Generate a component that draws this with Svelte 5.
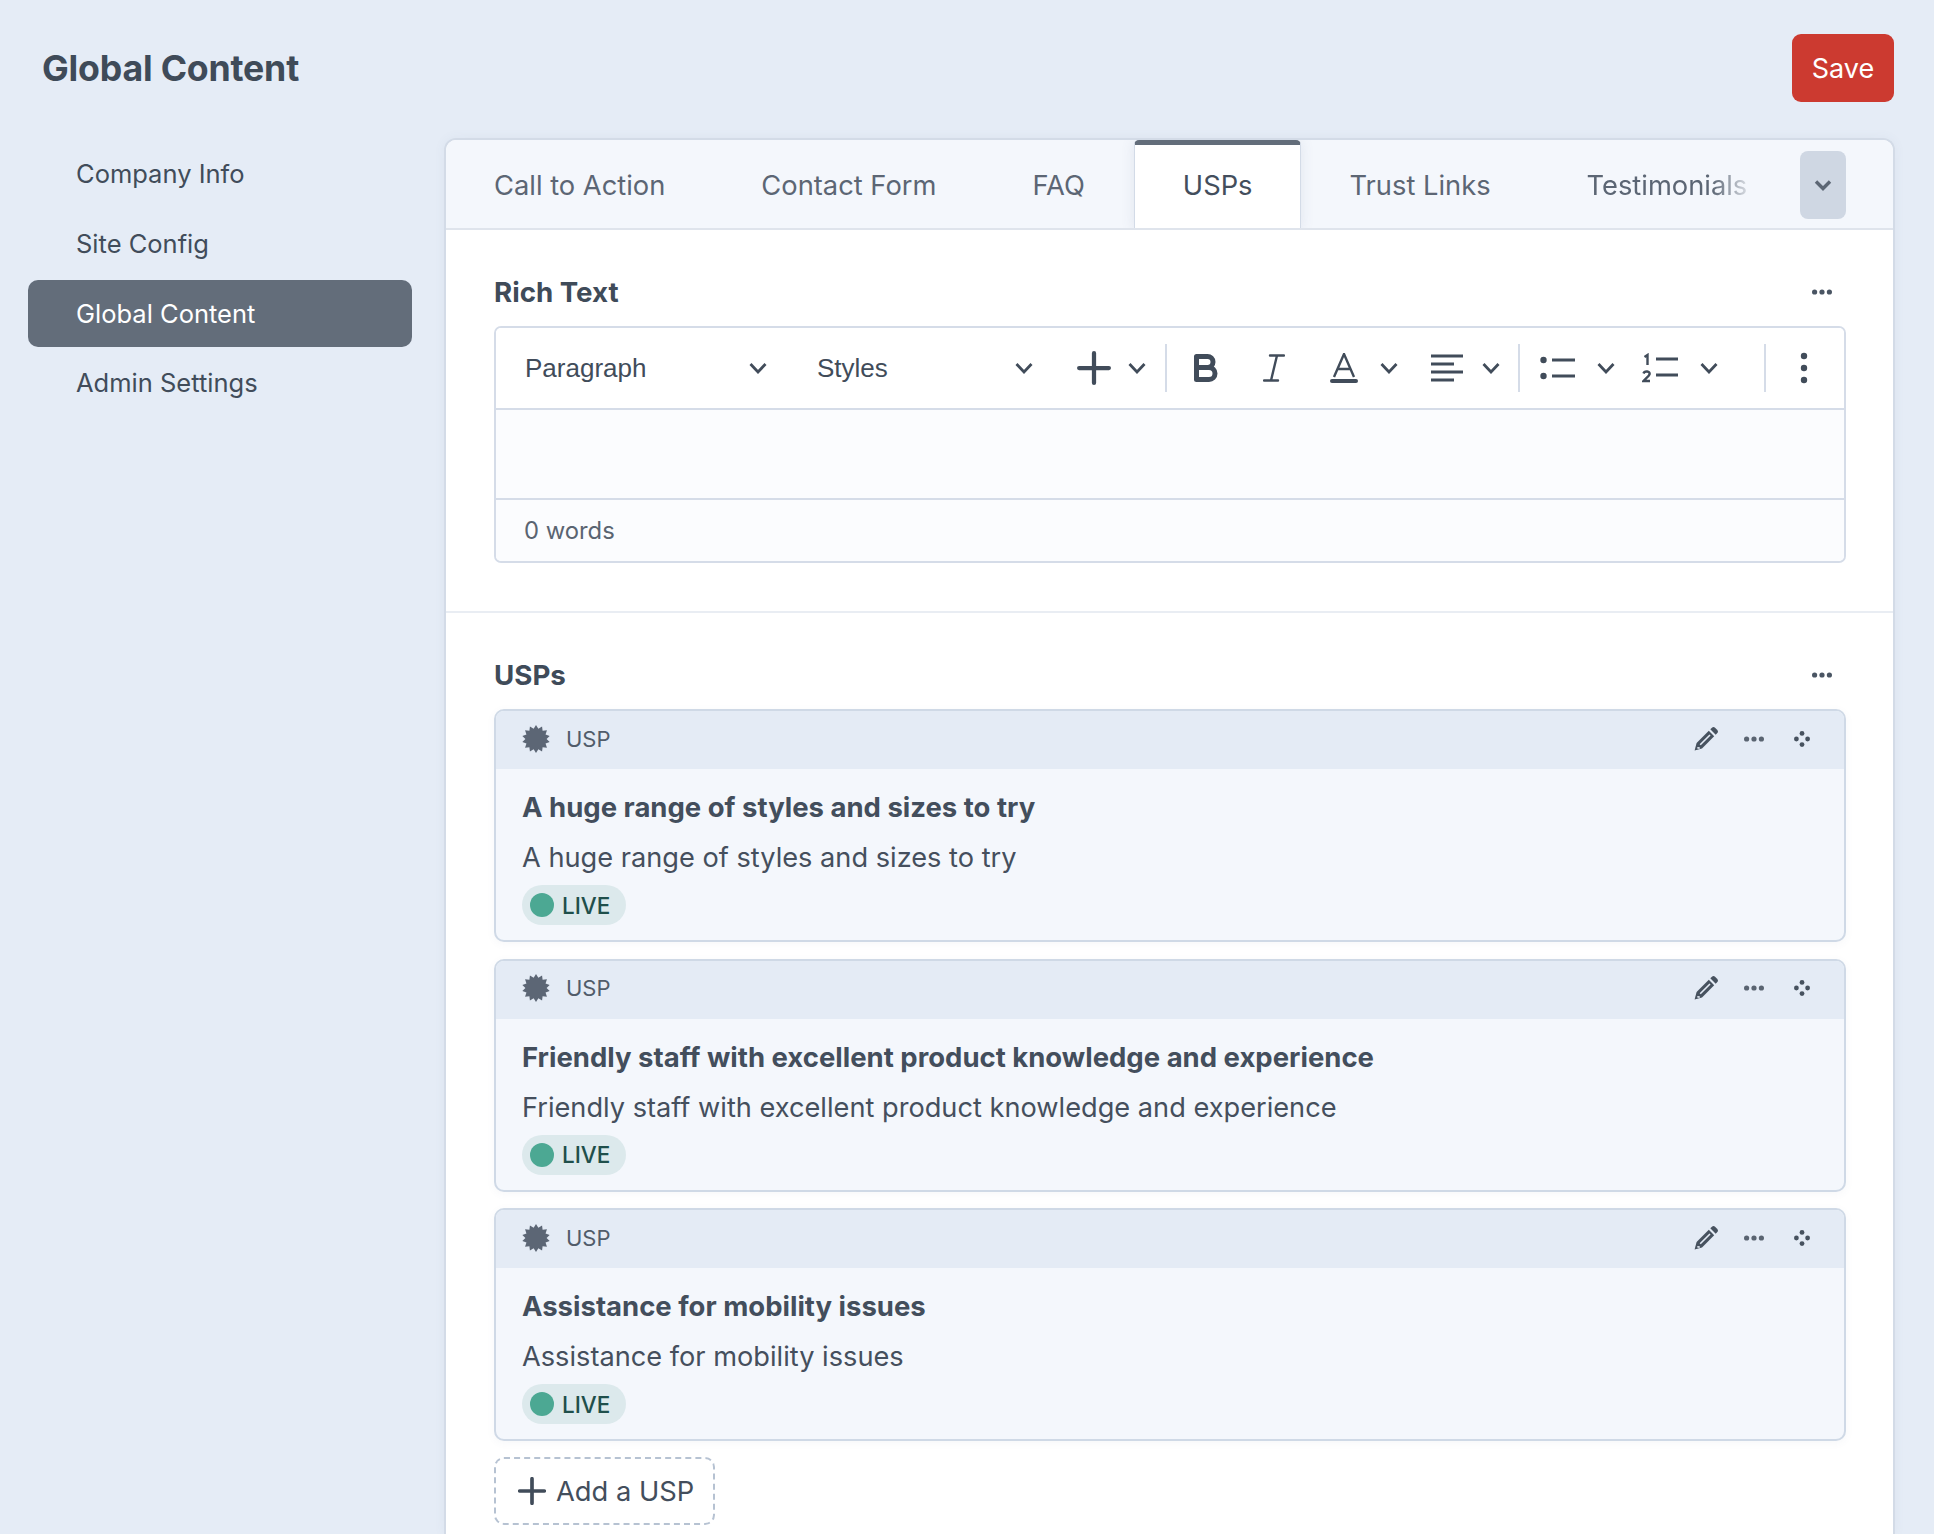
<script>
  const tabs = ['Call to Action', 'Contact Form', 'FAQ', 'USPs', 'Trust Links', 'Testimonials'];
  const nav = ['Company Info', 'Site Config', 'Global Content', 'Admin Settings'];
  const usps = [
    'A huge range of styles and sizes to try',
    'Friendly staff with excellent product knowledge and experience',
    'Assistance for mobility issues'
  ];
  const burst = Array.from({ length: 28 }, (_, i) => {
    const r = i % 2 ? 10.600 : 14;
    const a = (i * Math.PI) / 14;
    return `${(14 + r * Math.sin(a)).toFixed(2)},${(14 - r * Math.cos(a)).toFixed(2)}`;
  }).join(' ');
</script>

{#snippet chevron()}
  <svg class="chev" viewBox="0 0 18 12" aria-hidden="true"><path d="M1.500 2 9 10l7.500-8" /></svg>
{/snippet}

{#snippet dots()}
  <svg class="dots" viewBox="0 0 20 6" aria-hidden="true"><circle cx="2.600" cy="3" r="2.600" /><circle cx="10" cy="3" r="2.600" /><circle cx="17.400" cy="3" r="2.600" /></svg>
{/snippet}

{#snippet plus(cls = '')}
  <svg class="plus {cls}" viewBox="0 0 32 32" aria-hidden="true"><path d="M16 2v28M2 16h28" /></svg>
{/snippet}

<div class="page">
  <header class="top">
    <h1>Global Content</h1>
    <button class="save">Save</button>
  </header>

  <div class="body">
    <nav class="side">
      {#each nav as item}
        <div class="nav-item" class:active={item === 'Global Content'}>{item}</div>
      {/each}
    </nav>

    <main class="panel">
      <div class="tabbar">
        <div class="tabs">
          {#each tabs as t}
            <div class="tab" class:on={t === 'USPs'}><span class:fade={t === 'Testimonials'}>{t}</span></div>
          {/each}
        </div>
        <button class="more" aria-label="More tabs">
          <svg viewBox="0 0 18 12" aria-hidden="true"><path d="M2 2.500 9 9.500l7-7" /></svg>
        </button>
      </div>

      <section class="sec first">
        <div class="sec-head"><h2>Rich Text</h2>{@render dots()}</div>
        <div class="editor">
          <div class="toolbar">
            <div class="tool select para"><span>Paragraph</span>{@render chevron()}</div>
            <div class="tool select styles"><span>Styles</span>{@render chevron()}</div>
            <div class="tool w-plus">{@render plus('big')}{@render chevron()}</div>
            <i class="sep s1"></i>
            <div class="tool w-b">
              <svg class="ic-b" viewBox="0 0 24 28" aria-hidden="true"><path d="M2.500 2.500h11a5.500 5.500 0 0 1 0 11h-11zM2.500 13.500h12.500a6 6 0 0 1 0 12H2.500z" /></svg>
            </div>
            <div class="tool w-i">
              <svg class="ic-i" viewBox="0 0 22 28" aria-hidden="true"><path d="M7 1.500h14M1 26.500h14M14 1.500 8 26.500" /></svg>
            </div>
            <div class="tool w-a">
              <svg class="ic-a" viewBox="0 0 28 30" aria-hidden="true"><path class="thin" d="M4 24 14 1l10 23M7.500 16h13" /><path class="bar" d="M2 28h24" /></svg>
              {@render chevron()}
            </div>
            <div class="tool w-al">
              <svg class="ic-al" viewBox="0 0 32 28" aria-hidden="true"><path d="M0 2h32M0 10h23M0 18h32M0 26h23" /></svg>
              {@render chevron()}
            </div>
            <i class="sep s2"></i>
            <div class="tool w-ul">
              <svg class="ic-ul" viewBox="0 0 36 28" aria-hidden="true"><circle cx="3.500" cy="6" r="3.200" /><circle cx="3.500" cy="22" r="3.200" /><path d="M12 6h23M12 22h23" /></svg>
              {@render chevron()}
            </div>
            <div class="tool w-ol">
              <svg class="ic-ol" viewBox="0 0 36 30" aria-hidden="true"><path class="num" d="M2.500 4 5.500 2v10" /><path class="num" d="M1.500 20.500c1-3 7-2.500 6 .8-.6 2-4 4-6 6.700h6.500" /><path d="M14 6h22M14 22h22" /></svg>
              {@render chevron()}
            </div>
            <i class="sep s3"></i>
            <div class="tool w-v">
              <svg class="ic-v" viewBox="0 0 8 32" aria-hidden="true"><circle cx="4" cy="4" r="3.200" /><circle cx="4" cy="16" r="3.200" /><circle cx="4" cy="28" r="3.200" /></svg>
            </div>
          </div>
          <div class="ed-body"></div>
          <div class="ed-foot">0 words</div>
        </div>
      </section>

      <section class="sec">
        <div class="sec-head"><h2>USPs</h2>{@render dots()}</div>
        <div class="cards">
          {#each usps as u}
            <article class="card">
              <div class="card-head">
                <svg class="burst" viewBox="0 0 28 28" aria-hidden="true"><polygon points={burst} /></svg>
                <span class="kind">USP</span>
                <div class="actions">
                  <svg class="pencil" viewBox="0 0 24 24" aria-hidden="true">
                    <path d="M.6 23.400 2.600 16 14.800 3.800 20.200 9.200 8 21.400Z" />
                    <path d="M16.300 2.300 17.700.900a2.600 2.600 0 0 1 3.600 0l1.800 1.800a2.600 2.600 0 0 1 0 3.600L21.700 7.700Z" />
                    <path class="slit" d="M6.200 17.800 16 8M3.300 20.700l2.400.4" />
                  </svg>
                  {@render dots()}
                  <svg class="drag" viewBox="0 0 16 16" aria-hidden="true"><circle cx="8" cy="2.400" r="2.400" /><circle cx="2.400" cy="8" r="2.400" /><circle cx="13.600" cy="8" r="2.400" /><circle cx="8" cy="13.600" r="2.400" /></svg>
                </div>
              </div>
              <div class="card-body">
                <div class="c-title">{u}</div>
                <div class="c-desc">{u}</div>
                <div class="badge"><i></i>LIVE</div>
              </div>
            </article>
          {/each}
        </div>
        <button class="add">{@render plus('small')}<span>Add a USP</span></button>
      </section>
    </main>
  </div>
</div>

<style>
  :global(body) { margin: 0; background: #e5ecf6; }
  .page { height: 1534px; overflow: hidden; font-family: Inter, "Noto Sans", sans-serif; color: #414c5a; background: #e5ecf6; }
  button { font-family: inherit; cursor: pointer; }
  .top { height: 138px; box-sizing: border-box; padding: 34px 40px 0 42px; display: flex; justify-content: space-between; align-items: flex-start; }
  h1 { margin: 0; font-size: 35.700px; line-height: 68px; font-weight: 700; letter-spacing: -0.2px; color: #3f4b59; }
  .save { width: 102px; height: 68px; border: 0; border-radius: 9px; background: #cc3a30; color: #fff; font-size: 27px; padding: 0; }
  .body { display: flex; padding-left: 28px; }
  .side { width: 384px; flex: none; margin-right: 32px; display: flex; flex-direction: column; gap: 3px; padding-top: 2px; }
  .nav-item { height: 67px; line-height: 67px; border-radius: 10px; padding-left: 48px; font-size: 25.500px; color: #414c5a; }
  .nav-item:last-child { line-height: 65px; }
  .nav-item.active { background: #636d7a; color: #fff; }
  .panel { width: 1451px; box-sizing: border-box; flex: none; background: #fff; border: 2px solid #d3dbe7; border-bottom: 0; border-radius: 12px 12px 0 0; height: 1396px; box-shadow: 0 0 12px rgba(80, 100, 130, .06); }
  .tabbar { height: 90px; box-sizing: border-box; display: flex; background: #f4f7fc; border-bottom: 2px solid #dfe4ec; border-radius: 10px 10px 0 0; padding-right: 47px; }
  .tabs { display: flex; flex: 1; min-width: 0; overflow: hidden; }
  .tab { padding: 0 48px; height: 90px; line-height: 91px; font-size: 27.300px; color: #5c6674; white-space: nowrap; box-sizing: border-box; }
  .tab.on { position: relative; margin-left: 1px; background: #fff; color: #434e5c; border: 1px solid #d3dbe7; border-top: 5px solid #636d7a; border-bottom: 0; border-radius: 5px 5px 0 0; line-height: 81px; box-shadow: 0 0 14px rgba(80, 100, 130, .12); clip-path: inset(0 -20px 0 -20px); }
  .fade { display: inline-block; -webkit-mask-image: linear-gradient(90deg, #000 78%, rgba(0,0,0,.2) 100%); mask-image: linear-gradient(90deg, #000 78%, rgba(0,0,0,.2) 100%); }
  .more { flex: none; width: 46px; height: 68px; margin-top: 11px; border: 0; padding: 0; border-radius: 8px; background: #cfd7e3; display: flex; align-items: center; justify-content: center; }
  .more svg { width: 18px; height: 12px; fill: none; stroke: #5c6674; stroke-width: 3.400; }
  .sec { padding: 42px 47px 0 48px; }
  .sec.first { padding-bottom: 48px; border-bottom: 2px solid #e9edf3; }
  .sec-head { height: 40px; margin-bottom: 14px; display: flex; align-items: center; justify-content: space-between; padding-right: 14px; }
  h2 { margin: 0; font-size: 27.700px; font-weight: 700; color: #3f4b59; }
  .dots { width: 20px; height: 6px; fill: #4a5563; display: block; }
  .editor { height: 237px; box-sizing: border-box; border: 2px solid #d5dce8; border-radius: 7px; display: flex; flex-direction: column; overflow: hidden; }
  .toolbar { height: 82px; flex: none; box-sizing: border-box; border-bottom: 2px solid #d5dce8; display: flex; align-items: center; background: #fff; color: #414c5a; font-family: "Liberation Sans", Arial, sans-serif; font-size: 26px; }
  .tool { display: flex; align-items: center; height: 50px; flex: none; }
  .chev { width: 18px; height: 12px; fill: none; stroke: #414c5a; stroke-width: 2.800; flex: none; }
  .select { justify-content: space-between; box-sizing: border-box; }
  .para { width: 321px; padding: 0 50px 0 29px; }
  .styles { width: 250px; padding-right: 34px; }
  .plus { fill: none; stroke: #414c5a; stroke-width: 4; stroke-linecap: round; flex: none; }
  .big { width: 34px; height: 34px; }
  .small { width: 28px; height: 28px; stroke-width: 4.200; }
  .w-plus { gap: 17px; padding-left: 10px; }
  .sep { width: 2px; height: 48px; background: #d5dce8; flex: none; }
  .s1 { margin-left: 19px; }
  .w-b { margin-left: 27px; }
  .ic-b { width: 24px; height: 28px; fill: none; stroke: #414c5a; stroke-width: 5; stroke-linejoin: round; }
  .w-i { margin-left: 45px; }
  .ic-i { width: 22px; height: 28px; fill: none; stroke: #414c5a; stroke-width: 2.400; stroke-linecap: round; }
  .w-a { margin-left: 45px; gap: 22px; }
  .ic-a { width: 28px; height: 30px; flex: none; }
  .thin { fill: none; stroke: #414c5a; stroke-width: 2.400; }
  .bar { fill: none; stroke: #414c5a; stroke-width: 4; stroke-linecap: round; }
  .w-al { margin-left: 33px; gap: 19px; }
  .ic-al { width: 32px; height: 28px; fill: none; stroke: #414c5a; stroke-width: 3; flex: none; }
  .s2 { margin-left: 18px; }
  .w-ul { margin-left: 20px; gap: 21px; }
  .ic-ul { width: 36px; height: 28px; fill: #414c5a; stroke: none; flex: none; }
  .ic-ul path, .ic-ol path { fill: none; stroke: #414c5a; stroke-width: 3; }
  .ic-ol path.num { stroke-width: 2.400; }
  .w-ol { margin-left: 27px; gap: 22px; }
  .ic-ol { width: 36px; height: 30px; flex: none; }
  .s3 { margin-left: 46px; }
  .w-v { margin-left: 34px; }
  .ic-v { width: 8px; height: 32px; fill: #414c5a; }
  .ed-body { height: 88px; flex: none; box-sizing: content-box; background: #fbfcfe; border-bottom: 2px solid #d5dce8; }
  .ed-foot { flex: 1; background: #fbfcfe; padding-left: 28px; display: flex; align-items: center; font-size: 23.800px; color: #5a6471; }
  .cards { display: flex; flex-direction: column; gap: 16.500px; }
  .card { height: 233px; box-sizing: border-box; background: #f4f7fc; border: 2px solid #cfd9e6; border-radius: 10px; overflow: hidden; box-shadow: 0 2px 8px rgba(80, 100, 130, .05); }
  .card-head { height: 58px; box-sizing: border-box; background: #e4ebf5; display: flex; align-items: center; padding: 0 34px 3px 26px; }
  .burst { width: 28px; height: 28px; fill: #5c6675; flex: none; }
  .kind { margin-left: 16px; font-size: 22px; color: #515c6a; }
  .actions { margin-left: auto; display: flex; align-items: center; }
  .pencil { width: 24px; height: 24px; fill: #47525f; }
  .slit { fill: none; stroke: #e4ebf5; stroke-width: 1.600; }
  .actions .dots { margin-left: 26px; width: 20px; fill: #5a6471; }
  .drag { width: 16px; height: 16px; fill: #47525f; margin-left: 30px; }
  .card-body { padding: 21px 26px 0; }
  .c-title { font-size: 27.500px; line-height: 34px; font-weight: 700; color: #434e5c; }
  .c-desc { font-size: 27.200px; line-height: 34px; margin-top: 17px; color: #454f5d; }
  .badge { margin-top: 10px; width: 104px; height: 40px; box-sizing: border-box; border-radius: 20px; background: #dce9ec; display: flex; align-items: center; padding-left: 8px; font-size: 22.500px; font-weight: 500; color: #1f4f4b; gap: 8px; }
  .badge i { width: 24px; height: 24px; border-radius: 50%; background: #4ca893; flex: none; }
  .add { margin-top: 16px; width: 221px; height: 68px; box-sizing: border-box; border: 2px dashed #b6c2d2; border-radius: 10px; background: #fff; color: #434e5c; font-size: 27.300px; display: flex; align-items: center; padding: 0 0 0 22px; gap: 10px; }
</style>
